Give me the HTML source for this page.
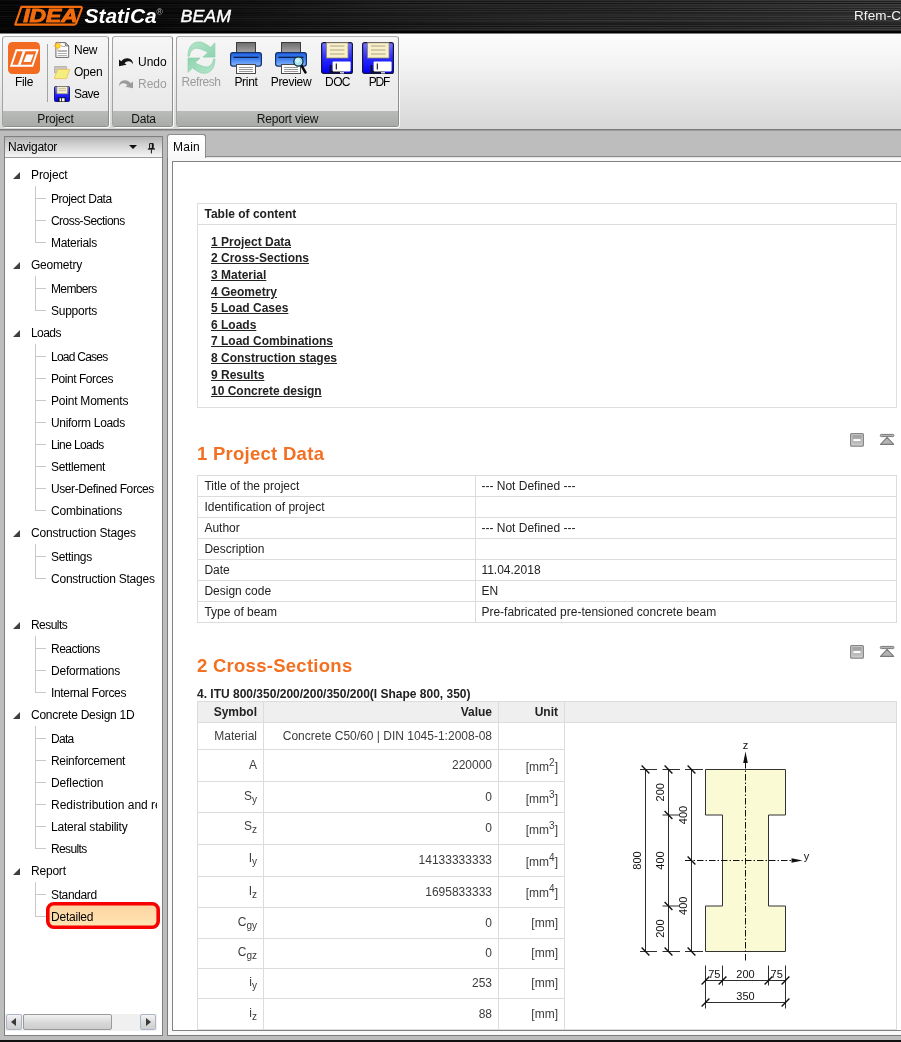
<!DOCTYPE html>
<html lang="en">
<head>
<meta charset="utf-8">
<title>IDEA StatiCa BEAM</title>
<style>
*{box-sizing:border-box}
html,body{margin:0;padding:0}
body{width:901px;height:1042px;overflow:hidden;position:relative;background:#bdbdbd;font-family:"Liberation Sans",sans-serif;font-size:12px;color:#000}
#wrap{position:absolute;left:0;top:0;width:901px;height:1042px;will-change:transform}
.abs{position:absolute}
/* ---------- title bar ---------- */
#title{position:absolute;left:0;top:0;width:901px;height:33px;background:#000;overflow:hidden}
#title .sheen{position:absolute;left:0;top:0;width:901px;height:33px;background:linear-gradient(90deg,#040404 0,#070707 150px,#181818 300px,#262626 480px,#303030 700px,#3a3a3a 901px)}
#title .shade{position:absolute;left:0;top:0;width:901px;height:33px;background:linear-gradient(180deg,rgba(0,0,0,0) 0.6px,rgba(0,0,0,0.5) 1.3px,rgba(0,0,0,0.5) 1.8px,rgba(0,0,0,0) 2.5px,rgba(0,0,0,0) 2.6px,rgba(0,0,0,0.6) 3.3px,rgba(0,0,0,0.6) 3.8px,rgba(0,0,0,0) 4.5px,rgba(0,0,0,0) 5.1px,rgba(0,0,0,0.35) 5.8px,rgba(0,0,0,0.35) 6.3px,rgba(0,0,0,0) 7.0px,rgba(0,0,0,0) 7.6px,rgba(0,0,0,0.45) 8.3px,rgba(0,0,0,0.45) 8.8px,rgba(0,0,0,0) 9.5px,rgba(0,0,0,0) 9.6px,rgba(0,0,0,0.45) 10.3px,rgba(0,0,0,0.45) 10.8px,rgba(0,0,0,0) 11.5px,rgba(0,0,0,0) 12.1px,rgba(0,0,0,0.5) 12.8px,rgba(0,0,0,0.5) 13.3px,rgba(0,0,0,0) 14.0px,rgba(0,0,0,0) 14.1px,rgba(0,0,0,0.35) 14.8px,rgba(0,0,0,0.35) 15.3px,rgba(0,0,0,0) 16.0px,rgba(0,0,0,0) 16.6px,rgba(0,0,0,0.35) 17.3px,rgba(0,0,0,0.35) 17.8px,rgba(0,0,0,0) 18.5px,rgba(0,0,0,0) 18.6px,rgba(0,0,0,0.35) 19.3px,rgba(0,0,0,0.35) 19.8px,rgba(0,0,0,0) 20.5px,rgba(0,0,0,0) 21.1px,rgba(0,0,0,0.45) 21.8px,rgba(0,0,0,0.45) 22.3px,rgba(0,0,0,0) 23.0px,rgba(0,0,0,0) 23.1px,rgba(0,0,0,0.7) 23.8px,rgba(0,0,0,0.7) 24.3px,rgba(0,0,0,0) 25.0px,rgba(0,0,0,0) 25.6px,rgba(0,0,0,0.6) 26.3px,rgba(0,0,0,0.6) 26.8px,rgba(0,0,0,0) 27.5px,rgba(0,0,0,0) 27.6px,rgba(0,0,0,0.35) 28.3px,rgba(0,0,0,0.35) 28.8px,rgba(0,0,0,0) 29.5px,rgba(0,0,0,0) 30px,rgba(0,0,0,.9) 31.5px,#000 33px)}
#title .rt{position:absolute;left:854px;top:8px;color:#f4f4f4;font-size:13.5px;white-space:nowrap;letter-spacing:.1px}
#titleline{position:absolute;left:0;top:33px;width:901px;height:1px;background:#7d7d7d}
/* ---------- ribbon ---------- */
#ribbon{position:absolute;left:0;top:34px;width:901px;height:95px;background:linear-gradient(180deg,#fdfdfd 0,#f2f2f2 35%,#d7d7d7 100%)}
#ribline{position:absolute;left:0;top:129px;width:901px;height:2px;background:linear-gradient(180deg,#7c7c7c 0,#7c7c7c 50%,#9c9c9c 50%,#9c9c9c 100%)}
.grp{position:absolute;top:36px;height:91px;border:1px solid #8e8e8e;border-top-color:#b0b0b0;border-left-color:#a2a2a2;box-shadow:1px 1px 0 #fbfbfb;border-radius:3px;background:linear-gradient(180deg,#f6f6f6 0,#ececec 60%,#e6e6e6 100%);overflow:hidden}
.grp .cap{position:absolute;left:0;right:0;bottom:0;height:15px;background:linear-gradient(180deg,#babcba 0,#a9aba9 100%);text-align:center;line-height:16px;font-size:12px;letter-spacing:-.15px;color:#111}
.seg{font-family:"Liberation Sans",sans-serif;font-size:12px;letter-spacing:-.25px;white-space:nowrap}
.rl{position:absolute;white-space:nowrap;line-height:14px;font-size:12px;letter-spacing:-.25px}
.rc{position:absolute;white-space:nowrap;line-height:14px;font-size:12px;letter-spacing:-.3px;text-align:center;width:60px}
.dis{color:#9c9c9c}
/* ---------- navigator ---------- */
#nav{position:absolute;left:4px;top:136px;width:159px;height:900px;background:#fff;border:1px solid #7f7f7f}
#navhead{position:absolute;left:0;top:0;width:157px;height:21px;background:linear-gradient(180deg,#b2b2b2 0,#cfcfcf 35%,#f6f6f6 100%);border-bottom:1px solid #9a9a9a}
#navhead span{position:absolute;left:3px;top:3px;line-height:14px}
.tp,.tc{position:absolute;white-space:nowrap;line-height:14px;font-size:12px;letter-spacing:-.2px}
.tp{left:26px}
.tc{left:46px}
.tw{position:absolute;left:8px;width:0;height:0;border-left:7px solid transparent;border-bottom:7px solid #404040}
.vl{position:absolute;left:30px;width:1px;background:#c8c8c8}
.hl{position:absolute;left:30px;width:11px;height:1px;background:#c8c8c8}
.sel{position:absolute;left:41px;width:114px;height:27px;border:3px solid #f40000;border-radius:6px;background:linear-gradient(180deg,#fdd29a 0,#fee0ae 100%)}
.sbb{position:absolute;top:877px;width:16px;height:16px;border:1px solid #aab6c8;border-radius:2px;background:linear-gradient(180deg,#f4f4f4 0,#dcdcdc 50%,#cfcfcf 100%)}
.sbb i{position:absolute;top:3px;width:0;height:0;border-top:4.5px solid transparent;border-bottom:4.5px solid transparent}
.sbt{position:absolute;left:18px;top:877px;width:89px;height:16px;border:1px solid #9a9a9a;border-radius:2px;background:linear-gradient(180deg,#f2f2f2 0,#dadada 50%,#cdcdcd 100%)}
/* ---------- main ---------- */
#tab{position:absolute;left:167px;top:134px;width:39px;height:24px;background:linear-gradient(180deg,#fff,#f8f8f8);border:1px solid #8c8c8c;border-bottom:none;border-radius:3px 3px 0 0}
#tab span{position:absolute;left:5px;top:5px;line-height:14px}
#tabline{position:absolute;left:206px;top:156px;width:695px;height:1px;background:#8a8a8a}
#frame{position:absolute;left:167px;top:157px;width:740px;height:879px;background:#f8f8f8;border:1px solid #7c7c7c;border-top:none}
#tabtop{position:absolute;left:206px;top:157px;width:695px;height:1px;background:#e4e4e4}
#page{position:absolute;left:172px;top:161px;width:735px;height:870px;background:#fff;border:1px solid #828282;overflow:hidden}
#botline{position:absolute;left:0;top:1036px;width:901px;height:4px;background:#bdbdbd}
#botblack{position:absolute;left:0;top:1040px;width:901px;height:2px;background:#111}
/* report (coordinates relative to #page content box: page origin = 173,162) */
.rep{color:#222}
.bx{position:absolute;border:1px solid #dedede}
h1.h{position:absolute;margin:0;font-size:18.5px;letter-spacing:.28px;font-weight:bold;color:#f37021;line-height:22px;white-space:nowrap}
table{border-collapse:collapse;position:absolute;font-size:12px;color:#222}
td,th{border:1px solid #dedede;padding:0 6px;font-weight:normal}
.toc a{display:block;color:#222;font-weight:bold;text-decoration:underline;line-height:16.6px;height:16.6px;white-space:nowrap}
.tx{position:absolute;white-space:nowrap;line-height:14px;font-size:12px;color:#222}
.tx.b{font-weight:bold}
.tx.g{color:#3c3c3c}
.sb{font-size:10px;position:relative;top:3px}
.sp{font-size:10px;position:relative;top:-5px}
</style>
</head>
<body>
<div id="wrap">
<!-- TITLE BAR -->
<div id="title">
  <div class="sheen"></div>
  <svg class="abs" style="left:0;top:0" width="901" height="33">
    <defs>
      <filter id="brush" x="0" y="0" width="100%" height="100%">
        <feTurbulence type="fractalNoise" baseFrequency="0.004 0.8" numOctaves="2" seed="11" result="n"/>
        <feColorMatrix type="matrix" values="0 0 0 0 1  0 0 0 0 1  0 0 0 0 1  .9 0 0 0 -.28"/>
      </filter>
    </defs>
        <rect width="901" height="33" filter="url(#brush)" opacity=".13"/>
  </svg>
  <div class="shade"></div>
  <!-- logo -->
  <svg class="abs" style="left:0;top:0" width="260" height="33" viewBox="0 0 260 33" font-family="Liberation Sans, sans-serif">
    <path d="M15.2 24.6 L21.4 6.9 H80.6 Q82.4 6.9 81.8 8.6 L76.4 23 Q75.8 24.6 74 24.6 Z" fill="none" stroke="#f26c0e" stroke-width="2.1" stroke-linejoin="round"/>
    <text x="23.2" y="22.3" font-size="18.2" font-weight="bold" font-style="italic" fill="#f26c0e" stroke="#f26c0e" stroke-width=".9" stroke-linejoin="miter" textLength="54.5" lengthAdjust="spacingAndGlyphs">IDEA</text>
    <text x="84.6" y="22.8" font-size="19.5" font-weight="bold" font-style="italic" fill="#fff" textLength="72" lengthAdjust="spacingAndGlyphs">StatiCa</text>
    <text x="156.6" y="14.6" font-size="8.5" fill="#b8b8b8">®</text>
    <text x="180.6" y="21.7" font-size="15.8" font-style="italic" fill="#fff" textLength="50.4" lengthAdjust="spacingAndGlyphs" stroke="#fff" stroke-width=".35">BEAM</text>
  </svg>
  <div class="rt">Rfem-Co</div>
</div>
<div id="titleline"></div>

<!-- RIBBON -->
<div id="ribbon"></div>
<div id="ribline"></div>
<div class="grp" id="g1" style="left:2px;width:107px"><div class="cap">Project</div></div>
<div class="grp" id="g2" style="left:112px;width:61px"><div class="cap" style="padding-left:2px">Data</div></div>
<div class="grp" id="g3" style="left:176px;width:223px"><div class="cap">Report view</div></div>

<!-- File -->
<svg class="abs" style="left:8px;top:42px" width="32" height="32" viewBox="0 0 32 32">
  <rect x="0" y="0" width="32" height="32" rx="4.5" fill="#f26b21"/>
  <path d="M3.2 23.8 L8.4 8.2 H29.6 L24.4 23.8 Z" fill="none" stroke="#fff" stroke-width="1.9" stroke-linejoin="miter"/>
  <path d="M9.8 23.2 L14.9 8.8 H17.6 L12.5 23.2 Z" fill="#fff"/>
  <path d="M15.5 19.9 L18.5 12.4 H25.7 L22.6 19.9 Z" fill="#fff"/>
</svg>
<div class="rc" style="left:-6px;top:75px">File</div>
<div class="abs" style="left:47px;top:44px;width:1px;height:58px;background:#a3a3a3"></div>

<!-- New -->
<svg class="abs" style="left:52px;top:40px" width="20" height="20" viewBox="0 0 20 20">
  <path d="M3.9 2.6 H13.4 L16.7 5.9 V17.4 H3.9 Z" fill="#fdfdfd" stroke="#6a6a6a" stroke-width="1"/>
  <path d="M13.4 2.6 V5.9 H16.7 Z" fill="#d8d8d8" stroke="#6a6a6a" stroke-width=".9"/>
  <path d="M9.5 6.5 H13" stroke="#b0b0b0" stroke-width="1"/>
  <path d="M5.6 11 H15" stroke="#b4b4b4" stroke-width="1.9"/>
  <path d="M5.6 13.5 H15 M5.6 15.5 H15" stroke="#b0b0b0" stroke-width="1"/>
  <path d="M5.8 1.6 L6.5 4.2 L8.2 3.4 L7.4 5.1 L10.0 5.8 L7.4 6.5 L8.2 8.2 L6.5 7.4 L5.8 10.0 L5.1 7.4 L3.4 8.2 L4.2 6.5 L1.6 5.8 L4.2 5.1 L3.4 3.4 L5.1 4.2 Z" fill="#ffb238" stroke="#fb9a2c" stroke-width=".4"/>
  <circle cx="5.8" cy="5.8" r="1.9" fill="#ffe21a"/>
</svg>
<div class="rl" style="left:74px;top:43px">New</div>

<!-- Open -->
<svg class="abs" style="left:52px;top:62px" width="20" height="20" viewBox="0 0 20 20">
  <path d="M2.5 4.5 H14.5 V11 H2.5 Z" fill="#c6c6c6" stroke="#b0ac9c" stroke-width=".8"/>
  <path d="M2.3 16.6 L5.6 7.4 H17.8 L14.7 16.6 Z" fill="#f4ed80" stroke="#f2bd55" stroke-width=".8"/>
</svg>
<div class="rl" style="left:74px;top:65px">Open</div>

<!-- Save -->
<svg class="abs" style="left:54px;top:86px" width="16" height="16" viewBox="0 0 16 16">
  <defs><linearGradient id="fb" x1="0" y1="0" x2="0" y2="1"><stop offset="0" stop-color="#7a7af6"/><stop offset=".55" stop-color="#2424fb"/><stop offset="1" stop-color="#0000f0"/></linearGradient></defs>
  <rect x=".5" y=".5" width="15" height="15" rx="1" fill="url(#fb)" stroke="#1b1b6e" stroke-width="1"/>
  <rect x="2.9" y=".6" width="10.6" height="7.2" fill="#f8efc8" stroke="#8d896b" stroke-width=".6"/>
  <path d="M4.6 2.6 H11.8 M4.6 4.6 H11.8" stroke="#b9b296" stroke-width=".8"/>
  <rect x="4.2" y="11.4" width="7.6" height="4.6" fill="#111"/>
  <rect x="5.6" y="12.2" width="1.6" height="3.2" fill="#fff"/><rect x="8" y="12.2" width="2.6" height="3.2" fill="#fff"/>
</svg>
<div class="rl" style="left:74px;top:87px;letter-spacing:-.6px">Save</div>

<!-- Undo / Redo -->
<svg class="abs" style="left:118px;top:55px" width="16" height="13" viewBox="0 0 16 13">
  <path d="M1 11.2 V4.6 L3.3 6.2 C5.4 3.3 9.3 2.3 12.3 4 C14.2 5.1 15 7 14.9 9.6 C14.2 7.5 12.8 6.3 10.8 6.2 C9 6.1 7.6 6.8 6.5 8.3 L8.6 9.8 Z" fill="#141414"/>
</svg>
<div class="rl" style="left:138px;top:55px;letter-spacing:0">Undo</div>
<svg class="abs" style="left:118px;top:77px" width="16" height="13" viewBox="0 0 16 13">
  <path d="M15 11.2 V4.6 L12.7 6.2 C10.6 3.3 6.7 2.3 3.7 4 C1.8 5.1 1 7 1.1 9.6 C1.8 7.5 3.2 6.3 5.2 6.2 C7 6.1 8.4 6.8 9.5 8.3 L7.4 9.8 Z" fill="#9b9b9b"/>
</svg>
<div class="rl dis" style="left:138px;top:77px;letter-spacing:0">Redo</div>

<!-- Refresh -->
<svg class="abs" style="left:182px;top:38px" width="40" height="40" viewBox="0 0 40 40">
  <defs><linearGradient id="gr" x1="0" y1="0" x2="1" y2="1"><stop offset="0" stop-color="#b4e6ca"/><stop offset="1" stop-color="#8ed3ae"/></linearGradient>
  <path id="rfa" d="M6.0 18.2 C6.0 13 7.4 9.5 8.9 7.6 C11 5.2 13.5 4.0 16.4 4.0 C19 4.0 21.2 4.6 23.1 5.8 C25 6.9 26.8 8.1 28.4 9.3 L32.9 4.9 V19.1 H20.9 L25.8 14.7 C24 13.2 22 12.2 20 11.6 C18.2 10.8 16.4 10.2 14.7 10.2 C13 10.2 11.4 10.8 10.2 12 C9 13 8.3 14.4 8 15.6 C7.6 16.6 7.4 17.4 7.3 18.2 Z"/></defs>
  <use href="#rfa" fill="url(#gr)" stroke="#8ccfab" stroke-width=".7"/>
  <use href="#rfa" fill="url(#gr)" stroke="#8ccfab" stroke-width=".7" transform="rotate(180 19.45 19.6)"/>
</svg>
<div class="rc dis" style="left:171px;top:75px;letter-spacing:-.45px">Refresh</div>

<!-- Print -->
<svg class="abs" style="left:230px;top:42px" width="32" height="32" viewBox="0 0 32 32">
  <defs>
    <linearGradient id="pg" x1="0" y1="0" x2="0" y2="1"><stop offset="0" stop-color="#6c6c6c"/><stop offset="1" stop-color="#a9a9a9"/></linearGradient>
    <linearGradient id="pb" x1="0" y1="0" x2="0" y2="1"><stop offset="0" stop-color="#1f63e0"/><stop offset=".45" stop-color="#3d7ff0"/><stop offset="1" stop-color="#8db8fa"/></linearGradient>
  </defs>
  <g id="prn">
    <rect x="6.5" y=".5" width="19" height="11" fill="url(#pg)" stroke="#3c3c3c" stroke-width="1"/>
    <rect x=".6" y="10.6" width="30.8" height="13.6" rx="2.4" fill="url(#pb)" stroke="#15306e" stroke-width="1.2"/>
    <path d="M3.5 15.3 H28.5" stroke="#0c1c4a" stroke-width="1.3"/>
    <rect x="6.5" y="22.5" width="19" height="9" fill="#fdfdfd" stroke="#4a4a4a" stroke-width="1"/>
    <path d="M9 25.5 H23 M9 27.5 H23 M9 29.5 H23" stroke="#9a9a9a" stroke-width="1"/>
  </g>
</svg>
<div class="rc" style="left:216px;top:75px">Print</div>

<!-- Preview -->
<svg class="abs" style="left:275px;top:42px" width="34" height="32" viewBox="0 0 34 32">
  <use href="#prn"/>
  <path d="M26.4 23.4 L30.4 30.4" stroke="#0a0a0a" stroke-width="2.6" stroke-linecap="round"/>
  <circle cx="23.4" cy="19.6" r="4.6" fill="#a4e6ee" stroke="#10202c" stroke-width="1.2"/>
  <circle cx="22.6" cy="18.6" r="2.2" fill="#cdf4f8"/>
</svg>
<div class="rc" style="left:261px;top:75px">Preview</div>

<!-- DOC -->
<svg class="abs" style="left:321px;top:42px" width="32" height="32" viewBox="0 0 32 32">
  <defs><linearGradient id="fb2" x1="0" y1="0" x2="0" y2="1"><stop offset="0" stop-color="#7676fb"/><stop offset=".5" stop-color="#2a2aff"/><stop offset="1" stop-color="#0000f2"/></linearGradient></defs>
  <g id="flp">
    <rect x=".6" y=".6" width="30.8" height="30.8" rx="2" fill="url(#fb2)" stroke="#14143c" stroke-width="1.2"/>
    <rect x="5.5" y=".8" width="21.5" height="15.2" fill="#f9f0c8" stroke="#8e8a6c" stroke-width=".8"/>
    <path d="M9 4 H23.5 M9 8 H23.5 M9 12 H23.5" stroke="#aaa48a" stroke-width="1"/>
    <path d="M9.5 23 V29.8 H22" fill="none" stroke="#111" stroke-width="1.8"/>
    <rect x="11.6" y="19.6" width="18" height="9.8" rx=".8" fill="#fff"/>
    <path d="M15.3 21.6 V27.4" stroke="#111" stroke-width="1.1"/>
    <path d="M19 30.8 H23" stroke="#fff" stroke-width="1.2"/>
  </g>
</svg>
<div class="rc" style="left:307.5px;top:75px;letter-spacing:-.6px">DOC</div>

<!-- PDF -->
<svg class="abs" style="left:362px;top:42px" width="32" height="32" viewBox="0 0 32 32"><use href="#flp"/></svg>
<div class="rc" style="left:349px;top:75px;letter-spacing:-1.1px">PDF</div>

<!-- NAVIGATOR -->
<div id="nav">
  <div id="navhead"><span class="seg">Navigator</span>
    <div class="abs" style="left:124px;top:8px;width:0;height:0;border-left:4px solid transparent;border-right:4px solid transparent;border-top:4px solid #111"></div>
    <svg class="abs" style="left:142px;top:6px" width="9" height="11" viewBox="0 0 9 11"><path d="M2.6 .6h3.4v5h-3.4z" fill="none" stroke="#111" stroke-width="1"/><path d="M5.6 .4v5.4" stroke="#111" stroke-width="1.6"/><path d="M.8 6h7.2" stroke="#111" stroke-width="1.2"/><path d="M4.4 6.4v4" stroke="#111" stroke-width="1"/></svg>
  </div>
<div id="tree" style="position:absolute;left:0;top:21px;width:157px;height:856px;overflow:hidden">
<div class="vl" style="top:28px;height:57px"></div>
<div class="hl" style="top:40px"></div>
<div class="hl" style="top:62px"></div>
<div class="hl" style="top:84px"></div>
<div class="vl" style="top:118px;height:35px"></div>
<div class="hl" style="top:130px"></div>
<div class="hl" style="top:152px"></div>
<div class="vl" style="top:186px;height:167px"></div>
<div class="hl" style="top:198px"></div>
<div class="hl" style="top:220px"></div>
<div class="hl" style="top:242px"></div>
<div class="hl" style="top:264px"></div>
<div class="hl" style="top:286px"></div>
<div class="hl" style="top:308px"></div>
<div class="hl" style="top:330px"></div>
<div class="hl" style="top:352px"></div>
<div class="vl" style="top:386px;height:35px"></div>
<div class="hl" style="top:398px"></div>
<div class="hl" style="top:420px"></div>
<div class="vl" style="top:478px;height:57px"></div>
<div class="hl" style="top:490px"></div>
<div class="hl" style="top:512px"></div>
<div class="hl" style="top:534px"></div>
<div class="vl" style="top:568px;height:123px"></div>
<div class="hl" style="top:580px"></div>
<div class="hl" style="top:602px"></div>
<div class="hl" style="top:624px"></div>
<div class="hl" style="top:646px"></div>
<div class="hl" style="top:668px"></div>
<div class="hl" style="top:690px"></div>
<div class="vl" style="top:724px;height:35px"></div>
<div class="hl" style="top:736px"></div>
<div class="hl" style="top:758px"></div>
<div class="tw" style="top:14px"></div><div class="tp" style="top:10px;letter-spacing:-0.11px">Project</div>
<div class="tc" style="top:34px;letter-spacing:-0.44px">Project Data</div>
<div class="tc" style="top:56px;letter-spacing:-0.55px">Cross-Sections</div>
<div class="tc" style="top:78px;letter-spacing:-0.31px">Materials</div>
<div class="tw" style="top:104px"></div><div class="tp" style="top:100px;letter-spacing:-0.21px">Geometry</div>
<div class="tc" style="top:124px;letter-spacing:-0.64px">Members</div>
<div class="tc" style="top:146px;letter-spacing:-0.26px">Supports</div>
<div class="tw" style="top:172px"></div><div class="tp" style="top:168px;letter-spacing:-0.55px">Loads</div>
<div class="tc" style="top:192px;letter-spacing:-0.75px">Load Cases</div>
<div class="tc" style="top:214px;letter-spacing:-0.45px">Point Forces</div>
<div class="tc" style="top:236px;letter-spacing:-0.22px">Point Moments</div>
<div class="tc" style="top:258px;letter-spacing:-0.32px">Uniform Loads</div>
<div class="tc" style="top:280px;letter-spacing:-0.61px">Line Loads</div>
<div class="tc" style="top:302px;letter-spacing:-0.33px">Settlement</div>
<div class="tc" style="top:324px;letter-spacing:-0.41px">User-Defined Forces</div>
<div class="tc" style="top:346px;letter-spacing:-0.20px">Combinations</div>
<div class="tw" style="top:372px"></div><div class="tp" style="top:368px;letter-spacing:-0.17px">Construction Stages</div>
<div class="tc" style="top:392px;letter-spacing:-0.31px">Settings</div>
<div class="tc" style="top:414px;letter-spacing:-0.23px">Construction Stages</div>
<div class="tw" style="top:464px"></div><div class="tp" style="top:460px;letter-spacing:-0.55px">Results</div>
<div class="tc" style="top:484px;letter-spacing:-0.52px">Reactions</div>
<div class="tc" style="top:506px;letter-spacing:-0.20px">Deformations</div>
<div class="tc" style="top:528px;letter-spacing:-0.33px">Internal Forces</div>
<div class="tw" style="top:554px"></div><div class="tp" style="top:550px;letter-spacing:-0.26px">Concrete Design 1D</div>
<div class="tc" style="top:574px;letter-spacing:-0.72px">Data</div>
<div class="tc" style="top:596px;letter-spacing:-0.30px">Reinforcement</div>
<div class="tc" style="top:618px;letter-spacing:-0.11px">Deflection</div>
<div class="tc" style="top:640px;letter-spacing:0.00px;width:106px;overflow:hidden">Redistribution and reinforcement</div>
<div class="tc" style="top:662px;letter-spacing:-0.21px">Lateral stability</div>
<div class="tc" style="top:684px;letter-spacing:-0.64px">Results</div>
<div class="tw" style="top:710px"></div><div class="tp" style="top:706px;letter-spacing:-0.21px">Report</div>
<div class="tc" style="top:730px;letter-spacing:-0.36px">Standard</div>
<svg class="abs" style="left:41px;top:744px" width="114" height="27" viewBox="0 0 114 27"><defs><linearGradient id="selg" x1="0" y1="0" x2="0" y2="1"><stop offset="0" stop-color="#fdd3a0"/><stop offset="1" stop-color="#fee6b4"/></linearGradient></defs><rect x="1.8" y="1.8" width="110.4" height="23.4" rx="6" fill="url(#selg)" stroke="#f60000" stroke-width="3.6"/></svg>
<div class="tc" style="top:752px;letter-spacing:-0.22px">Detailed</div>
</div>
  <!-- scrollbar -->
  <div class="abs" style="left:0;top:877px;width:152px;height:17px;background:#f0f0f0"></div>
  <div class="sbb" style="left:1px"><i style="border-right:5px solid #3a3a3a;left:4px"></i></div>
  <div class="sbb" style="left:135px"><i style="border-left:5px solid #3a3a3a;left:5px"></i></div>
  <div class="sbt"></div>
</div>
<!-- MAIN -->
<div id="frame"></div>
<div id="tabline"></div>
<div id="tabtop"></div>
<div id="tab"><span class="seg" style="letter-spacing:.25px">Main</span></div>
<div id="page" class="rep">
<!--PAGE-->
<div class="bx" style="left:24px;top:41px;width:700px;height:205px"></div>
<div class="abs" style="left:25px;top:62px;width:698px;height:1px;background:#dcdcdc"></div>
<div class="tx b" style="left:31.5px;top:45px;">Table of content</div>
<div class="toc abs" style="left:38px;top:71.8px"><a>1 Project Data</a><a>2 Cross-Sections</a><a>3 Material</a><a>4 Geometry</a><a>5 Load Cases</a><a>6 Loads</a><a>7 Load Combinations</a><a>8 Construction stages</a><a>9 Results</a><a>10 Concrete design</a></div>
<svg class="abs" style="left:675px;top:269px" width="50" height="18" viewBox="0 0 50 18">
<defs><linearGradient id="ig440" x1="0" y1="0" x2="0" y2="1"><stop offset="0" stop-color="#9e9e9e"/><stop offset="1" stop-color="#c4c4c4"/></linearGradient></defs>
<rect x="2.7" y="2.6" width="12.6" height="12.6" rx="1" fill="#dadada" stroke="#838383" stroke-width="1.3"/>
<rect x="4.2" y="4.1" width="9.6" height="9.6" fill="url(#ig440)"/>
<rect x="5.4" y="8.1" width="7.2" height="1.9" fill="#fff"/>
<rect x="32.3" y="3.4" width="13.6" height="2.2" rx="1" fill="#b4b4b4" stroke="#7a7a7a" stroke-width="1"/>
<path d="M39.1 6.4 L45.7 13.4 H32.5 Z" fill="#b4b4b4" stroke="#7a7a7a" stroke-width="1.1" stroke-linejoin="round"/>
</svg>
<svg class="abs" style="left:675px;top:481px" width="50" height="18" viewBox="0 0 50 18">
<defs><linearGradient id="ig652" x1="0" y1="0" x2="0" y2="1"><stop offset="0" stop-color="#9e9e9e"/><stop offset="1" stop-color="#c4c4c4"/></linearGradient></defs>
<rect x="2.7" y="2.6" width="12.6" height="12.6" rx="1" fill="#dadada" stroke="#838383" stroke-width="1.3"/>
<rect x="4.2" y="4.1" width="9.6" height="9.6" fill="url(#ig652)"/>
<rect x="5.4" y="8.1" width="7.2" height="1.9" fill="#fff"/>
<rect x="32.3" y="3.4" width="13.6" height="2.2" rx="1" fill="#b4b4b4" stroke="#7a7a7a" stroke-width="1"/>
<path d="M39.1 6.4 L45.7 13.4 H32.5 Z" fill="#b4b4b4" stroke="#7a7a7a" stroke-width="1.1" stroke-linejoin="round"/>
</svg>
<h1 class="h" style="left:23.9px;top:281px">1 Project Data</h1>
<h1 class="h" style="left:23.9px;top:493px">2 Cross-Sections</h1>
<div class="abs" style="left:24px;top:313px;width:700px;height:1px;background:#dcdcdc"></div>
<div class="abs" style="left:24px;top:334px;width:700px;height:1px;background:#dcdcdc"></div>
<div class="abs" style="left:24px;top:355px;width:700px;height:1px;background:#dcdcdc"></div>
<div class="abs" style="left:24px;top:376px;width:700px;height:1px;background:#dcdcdc"></div>
<div class="abs" style="left:24px;top:397px;width:700px;height:1px;background:#dcdcdc"></div>
<div class="abs" style="left:24px;top:418px;width:700px;height:1px;background:#dcdcdc"></div>
<div class="abs" style="left:24px;top:439px;width:700px;height:1px;background:#dcdcdc"></div>
<div class="abs" style="left:24px;top:460px;width:700px;height:1px;background:#dcdcdc"></div>
<div class="abs" style="left:24px;top:313px;width:1px;height:148px;background:#dcdcdc"></div>
<div class="abs" style="left:302px;top:313px;width:1px;height:148px;background:#dcdcdc"></div>
<div class="abs" style="left:723px;top:313px;width:1px;height:148px;background:#dcdcdc"></div>
<div class="tx " style="left:31.4px;top:317px;">Title of the project</div>
<div class="tx " style="left:308.4px;top:317px;">--- Not Defined ---</div>
<div class="tx " style="left:31.4px;top:338px;">Identification of project</div>
<div class="tx " style="left:31.4px;top:359px;">Author</div>
<div class="tx " style="left:308.4px;top:359px;">--- Not Defined ---</div>
<div class="tx " style="left:31.4px;top:380px;">Description</div>
<div class="tx " style="left:31.4px;top:401px;">Date</div>
<div class="tx " style="left:308.4px;top:401px;">11.04.2018</div>
<div class="tx " style="left:31.4px;top:422px;">Design code</div>
<div class="tx " style="left:308.4px;top:422px;">EN</div>
<div class="tx " style="left:31.4px;top:443px;">Type of beam</div>
<div class="tx " style="left:308.4px;top:443px;">Pre-fabricated pre-tensioned concrete beam</div>
<div class="tx b" style="left:24px;top:525px;">4. ITU 800/350/200/200/350/200(I Shape 800, 350)</div>
<div class="abs" style="left:25px;top:540px;width:698px;height:20px;background:#efefef"></div>
<div class="abs" style="left:24px;top:539px;width:700px;height:1px;background:#dcdcdc"></div>
<div class="abs" style="left:24px;top:560px;width:700px;height:1px;background:#dcdcdc"></div>
<div class="abs" style="left:24px;top:587px;width:368px;height:1px;background:#dcdcdc"></div>
<div class="abs" style="left:24px;top:619px;width:368px;height:1px;background:#dcdcdc"></div>
<div class="abs" style="left:24px;top:650px;width:368px;height:1px;background:#dcdcdc"></div>
<div class="abs" style="left:24px;top:682px;width:368px;height:1px;background:#dcdcdc"></div>
<div class="abs" style="left:24px;top:714px;width:368px;height:1px;background:#dcdcdc"></div>
<div class="abs" style="left:24px;top:745px;width:368px;height:1px;background:#dcdcdc"></div>
<div class="abs" style="left:24px;top:776px;width:368px;height:1px;background:#dcdcdc"></div>
<div class="abs" style="left:24px;top:806px;width:368px;height:1px;background:#dcdcdc"></div>
<div class="abs" style="left:24px;top:836px;width:368px;height:1px;background:#dcdcdc"></div>
<div class="abs" style="left:24px;top:539px;width:1px;height:330px;background:#dcdcdc"></div>
<div class="abs" style="left:90px;top:539px;width:1px;height:330px;background:#dcdcdc"></div>
<div class="abs" style="left:325px;top:539px;width:1px;height:330px;background:#dcdcdc"></div>
<div class="abs" style="left:391px;top:539px;width:1px;height:330px;background:#dcdcdc"></div>
<div class="abs" style="left:723px;top:539px;width:1px;height:330px;background:#dcdcdc"></div>
<div class="tx b" style="right:649px;top:543px;">Symbol</div>
<div class="tx b" style="right:414px;top:543px;">Value</div>
<div class="tx b" style="right:348px;top:543px;">Unit</div>
<div class="tx g" style="right:649px;top:567px;">Material</div>
<div class="tx g" style="right:414px;top:567px;">Concrete C50/60 | DIN 1045-1:2008-08</div>
<div class="tx g" style="right:649px;top:596px;">A</div>
<div class="tx g" style="right:414px;top:596px;">220000</div>
<div class="tx g" style="right:348px;top:598px;">[mm<span class="sp">2</span>]</div>
<div class="tx g" style="right:649px;top:627px;">S<span class="sb">y</span></div>
<div class="tx g" style="right:414px;top:628px;">0</div>
<div class="tx g" style="right:348px;top:630px;">[mm<span class="sp">3</span>]</div>
<div class="tx g" style="right:649px;top:657px;">S<span class="sb">z</span></div>
<div class="tx g" style="right:414px;top:659px;">0</div>
<div class="tx g" style="right:348px;top:661px;">[mm<span class="sp">3</span>]</div>
<div class="tx g" style="right:649px;top:689px;">I<span class="sb">y</span></div>
<div class="tx g" style="right:414px;top:691px;">14133333333</div>
<div class="tx g" style="right:348px;top:693px;">[mm<span class="sp">4</span>]</div>
<div class="tx g" style="right:649px;top:722px;">I<span class="sb">z</span></div>
<div class="tx g" style="right:414px;top:723px;">1695833333</div>
<div class="tx g" style="right:348px;top:724px;">[mm<span class="sp">4</span>]</div>
<div class="tx g" style="right:649px;top:753px;">C<span class="sb">gy</span></div>
<div class="tx g" style="right:414px;top:754px;">0</div>
<div class="tx g" style="right:348px;top:754px;">[mm]</div>
<div class="tx g" style="right:649px;top:783px;">C<span class="sb">gz</span></div>
<div class="tx g" style="right:414px;top:784px;">0</div>
<div class="tx g" style="right:348px;top:784px;">[mm]</div>
<div class="tx g" style="right:649px;top:813px;">i<span class="sb">y</span></div>
<div class="tx g" style="right:414px;top:814px;">253</div>
<div class="tx g" style="right:348px;top:814px;">[mm]</div>
<div class="tx g" style="right:649px;top:844px;">i<span class="sb">z</span></div>
<div class="tx g" style="right:414px;top:845px;">88</div>
<div class="tx g" style="right:348px;top:845px;">[mm]</div>
<div class="abs" style="left:24px;top:867px;width:700px;height:1px;background:#dcdcdc"></div>
<svg class="abs" style="left:392px;top:561px" width="331" height="306" viewBox="0 0 331 306" font-family="Liberation Sans, sans-serif" font-size="11" fill="#111">
<path d="M140.5 46.5 L220.5 46.5 L220.5 92.0 L203.5 92.0 L203.5 183.0 L220.5 183.0 L220.5 228.5 L140.5 228.5 L140.5 183.0 L157.5 183.0 L157.5 92.0 L140.5 92.0 Z" fill="#fafad4" stroke="#333" stroke-width="1"/>
<path d="M180.5 39 V237.5" stroke="#111" stroke-width="1" stroke-dasharray="6.5 2 1.5 2" fill="none"/>
<path d="M120 137.5 H228" stroke="#111" stroke-width="1" stroke-dasharray="6.5 2 1.5 2" fill="none"/>
<path d="M180.5 28.5 L182.8 40 H178.2 Z" fill="#111"/>
<path d="M237.5 137.5 L226.5 135.2 V139.8 Z" fill="#111"/>
<text x="180.5" y="26" text-anchor="middle">z</text>
<text x="241.5" y="136.5" text-anchor="middle">y</text>
<path d="M80.5 46.5 V228.5 M103.5 46.5 V228.5 M126.5 46.5 V228.5 M75 46.5 H92 M97.5 46.5 H115 M120 46.5 H138 M75 228.5 H92 M97.5 228.5 H115 M120 228.5 H138 M97.5 92.0 H114.5 M97.5 183.0 H114.5 M140.5 242.5 V285.5 M220.5 242.5 V285.5 M157.5 242.5 V262.5 M203.5 242.5 V262.5 M140.5 257.5 H220.5 M140.5 279.5 H220.5" stroke="#2e2e2e" stroke-width="1" fill="none"/>
<path d="M76.6 42.6 L84.4 50.4 M76.6 224.6 L84.4 232.4 M99.6 42.6 L107.4 50.4 M99.6 88.1 L107.4 95.9 M99.6 179.1 L107.4 186.9 M99.6 224.6 L107.4 232.4 M122.6 42.6 L130.4 50.4 M122.6 133.6 L130.4 141.4 M122.6 224.6 L130.4 232.4 M136.6 261.4 L144.4 253.6 M153.6 261.4 L161.4 253.6 M199.6 261.4 L207.4 253.6 M216.6 261.4 L224.4 253.6 M136.6 283.4 L144.4 275.6 M216.6 283.4 L224.4 275.6" stroke="#111" stroke-width="1.4" fill="none"/>
<text transform="translate(76.0 137.5) rotate(-90)" text-anchor="middle">800</text>
<text transform="translate(98.8 69.3) rotate(-90)" text-anchor="middle">200</text>
<text transform="translate(98.8 137.5) rotate(-90)" text-anchor="middle">400</text>
<text transform="translate(98.8 205.6) rotate(-90)" text-anchor="middle">200</text>
<text transform="translate(121.6 92) rotate(-90)" text-anchor="middle">400</text>
<text transform="translate(121.6 182.8) rotate(-90)" text-anchor="middle">400</text>
<text x="149.3" y="255.3" text-anchor="middle">75</text>
<text x="180.5" y="255.3" text-anchor="middle">200</text>
<text x="211.7" y="255.3" text-anchor="middle">75</text>
<text x="180.5" y="277" text-anchor="middle">350</text>
</svg>
<!--/PAGE-->
</div>
<div id="botline"></div>
<div id="botblack"></div>
</div><!--wrap-->
</body>
</html>
